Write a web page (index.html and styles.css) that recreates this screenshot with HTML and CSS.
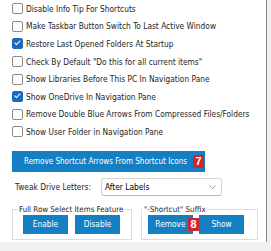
FILE: index.html
```html
<!DOCTYPE html>
<html lang="en">
<head>
    <meta charset="UTF-8">
    <title>Tweaks</title>
    <link rel="stylesheet" href="styles.css">
</head>
<body>
    <div class="panel">
        <div class="options">
            <label class="opt"><span class="box"></span>Disable Info Tip For Shortcuts</label>
            <label class="opt"><span class="box"></span>Make Taskbar Button Switch To Last Active Window</label>
            <label class="opt"><span class="box checked"></span>Restore Last Opened Folders At Startup</label>
            <label class="opt"><span class="box"></span>Check By Default "Do this for all current items"</label>
            <label class="opt"><span class="box"></span>Show Libraries Before This PC In Navigation Pane</label>
            <label class="opt"><span class="box checked"></span>Show OneDrive In Navigation Pane</label>
            <label class="opt"><span class="box"></span>Remove Double Blue Arrows From Compressed Files/Folders</label>
            <label class="opt"><span class="box"></span>Show User Folder in Navigation Pane</label>
        </div>

        <button class="btn btn-wide">Remove Shortcut Arrows From Shortcut Icons <span class="badge">7</span></button>

        <div class="drive-row">
            <span class="drive-label">Tweak Drive Letters:</span>
            <div class="select">
                <span>After Labels</span>
                <svg width="7" height="4" viewBox="0 0 7 4"><path d="M0.5 0.5 L3.5 3.5 L6.5 0.5" fill="none" stroke="#888" stroke-width="0.9"/></svg>
            </div>
        </div>

        <div class="groups">
            <fieldset class="group group-row">
                <legend>Full Row Select Items Feature</legend>
                <button class="btn">Enable</button>
                <button class="btn">Disable</button>
            </fieldset>
            <fieldset class="group group-suffix">
                <legend>"-Shortcut" Suffix</legend>
                <button class="btn">Remove</button>
                <span class="badge badge-mid">8</span>
                <button class="btn">Show</button>
            </fieldset>
        </div>
    </div>
</body>
</html>
```

FILE: styles.css
```css
body {
    margin: 0;
    background: #f0f0f0;
    font-family: "DejaVu Sans Condensed", "Liberation Sans", sans-serif;
    font-size: 8.3px;
    color: #1e1e1e;
}
.panel {
    width: 267px;
    height: 242px;
    box-sizing: border-box;
    background: white;
    border-right: 1px solid #8a8a8a;
    padding: 0 0 0 12px;
}
.options {
    display: flex;
    flex-direction: column;
}
.opt {
    display: flex;
    align-items: center;
    gap: 3px;
    height: 17.6px;
}
.box {
    width: 9px;
    height: 9px;
    border: 1px solid #8a8a8a;
    border-radius: 2px;
    background: white;
    position: relative;
}
.box.checked {
    background: #1a6bbf;
    border-color: #1a6bbf;
}
.box.checked::after {
    content: "";
    position: absolute;
    left: 3px;
    top: 0px;
    width: 2px;
    height: 5px;
    border: solid white;
    border-width: 0 1px 1px 0;
    transform: rotate(45deg);
}
.btn {
    font-family: inherit;
    font-size: 8.3px;
    color: white;
    background: #1480c3;
    border: none;
    padding: 0;
    height: 19px;
    width: 45px;
    flex: none;
}
.btn-wide {
    display: flex;
    align-items: center;
    justify-content: flex-end;
    gap: 6px;
    width: 193px;
    height: 21px;
    margin-top: 10px;
    padding-right: 1px;
    font-size: 8px;
}
.badge {
    display: inline-flex;
    align-items: center;
    justify-content: center;
    width: 11px;
    height: 13px;
    background: #d5232b;
    color: white;
    font-family: "Liberation Sans", sans-serif;
    font-weight: bold;
    font-size: 11px;
    flex: none;
}
.drive-row {
    display: flex;
    align-items: center;
    margin-top: 6px;
    padding-left: 3px;
}
.drive-label {
    width: 86px;
}
.select {
    display: flex;
    align-items: center;
    justify-content: space-between;
    width: 121px;
    height: 18px;
    box-sizing: border-box;
    border: 1px solid #d6d6d6;
    border-bottom-color: #b8b8b8;
    border-radius: 3px;
    padding: 0 5px 0 3px;
    color: #000;
}
.groups {
    display: flex;
    gap: 9px;
    margin-top: 9px;
}
.group {
    margin: 0;
    border: 1px solid #dcdcdc;
    display: flex;
    align-items: center;
    gap: 7px;
    padding: 0 8px 5px 10px;
    box-sizing: border-box;
    min-width: 0;
}
.group legend {
    padding: 0 1px;
    margin-left: -5px;
    line-height: 10px;
    white-space: nowrap;
    font-size: 7.9px;
}
.group-row {
    width: 120px;
}
.group-suffix {
    width: 117px;
    gap: 0;
    padding-left: 6px;
}
.badge-mid {
    margin-left: -5px;
    position: relative;
}
```
